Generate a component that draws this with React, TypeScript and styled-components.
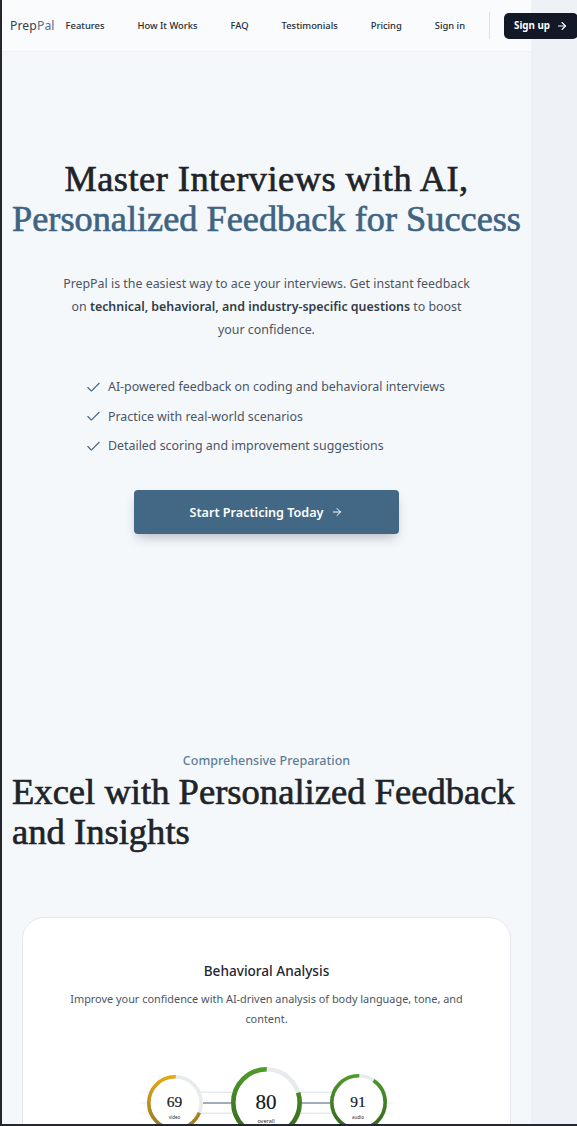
import React from "react";
import styled, { createGlobalStyle } from "styled-components";
import { ArrowRight, Check } from "lucide-react";

const GlobalStyle = createGlobalStyle`
  html, body {
    margin: 0;
    padding: 0;
    background: #eef2f6;
    overflow-x: hidden;
    scrollbar-width: none;
  }
  html::-webkit-scrollbar, body::-webkit-scrollbar { display: none; }
  * { box-sizing: border-box; }
`;

const Page = styled.div`
  width: 531px;
  min-height: 1500px;
  border-left: 2px solid #24282e;
  background: #f5f8fb;
  font-family: "Noto Sans", "Open Sans", sans-serif;
  color: #1f2937;
`;

const FrameEdge = styled.div`
  position: fixed;
  left: 0;
  right: 0;
  bottom: 0;
  height: 2px;
  background: #24282e;
  pointer-events: none;
  z-index: 10;
`;

const Header = styled.header`
  height: 52px;
  display: flex;
  align-items: center;
  padding-left: 8px;
  background: #fafbfd;
  border-bottom: 1px solid #eef1f5;
  white-space: nowrap;
`;

const Logo = styled.span`
  font-size: 12.2px;
  color: #3a4048;
  letter-spacing: 0.1px;
`;

const LogoAccent = styled.span`
  color: #4b7393;
`;

const NavLinks = styled.nav`
  display: flex;
  align-items: center;
  gap: 33px;
  margin-left: 11px;
`;

const NavLink = styled.a`
  font-size: 9.4px;
  font-weight: 500;
  color: #232a33;
  text-decoration: none;
`;

const Divider = styled.div`
  flex: none;
  width: 1px;
  height: 27px;
  background: #dde1e6;
  margin: 0 14px 0 24px;
`;

const SignUp = styled.button`
  display: inline-flex;
  align-items: center;
  gap: 6px;
  height: 26px;
  padding: 0 10px;
  border: none;
  border-radius: 5px;
  background: #121826;
  color: #ffffff;
  font-family: inherit;
  font-size: 9.8px;
  font-weight: 700;
`;

const Hero = styled.section`
  padding: 107px 10px 110px;
  text-align: center;
`;

const Title = styled.h1`
  margin: 0;
  font-family: "Liberation Serif", "Times New Roman", serif;
  font-size: 36.3px;
  line-height: 40px;
  font-weight: 400;
  color: #202328;
  -webkit-text-stroke: 0.65px currentColor;
`;

const TitleLead = styled.span`
  letter-spacing: 0.5px;
`;

const TitleAccent = styled.span`
  color: #3f6482;
`;

const Lead = styled.p`
  margin: 33px auto 0;
  max-width: 414px;
  font-size: 12.4px;
  line-height: 23px;
  color: #4b5563;
`;

const LeadStrong = styled.b`
  font-weight: 600;
  color: #343c48;
`;

const CheckList = styled.ul`
  display: flex;
  flex-direction: column;
  gap: 9.5px;
  width: fit-content;
  margin: 36px auto 0;
  padding: 0;
  list-style: none;
  text-align: left;
`;

const CheckItem = styled.li`
  display: flex;
  align-items: center;
  gap: 6px;
  font-size: 12.4px;
  line-height: 20px;
  color: #4b5563;

  svg {
    flex: none;
    color: #3e5f7c;
    margin-left: -3px;
  }
`;

const PrimaryButton = styled.button`
  display: flex;
  align-items: center;
  gap: 8px;
  width: fit-content;
  height: 44px;
  margin: 34px auto 0;
  padding: 0 56px;
  border: none;
  border-radius: 4px;
  background: #436886;
  color: #ffffff;
  font-family: inherit;
  font-size: 12.6px;
  font-weight: 600;
  box-shadow: 0 6px 12px -3px rgba(30, 41, 59, 0.3);
`;

const Features = styled.section`
  padding: 108px 10px 0;
`;

const Eyebrow = styled.p`
  margin: 0;
  text-align: center;
  font-size: 12.5px;
  line-height: 18px;
  font-weight: 500;
  color: #5d7e98;
`;

const SectionTitle = styled.h2`
  margin: 2px 0 0;
  font-family: "Liberation Serif", "Times New Roman", serif;
  font-size: 36.6px;
  line-height: 40px;
  font-weight: 400;
  color: #202328;
  -webkit-text-stroke: 0.65px currentColor;
`;

const Card = styled.div`
  margin: 65px 10px 0;
  padding: 43px 20px 40px;
  background: #ffffff;
  border: 1px solid #e4e8ee;
  border-radius: 22px;
  text-align: center;
`;

const CardTitle = styled.h3`
  margin: 0;
  font-size: 13.6px;
  line-height: 20px;
  font-weight: 500;
  color: #1f2630;
`;

const CardText = styled.p`
  margin: 8px auto 0;
  max-width: 404px;
  font-size: 10.9px;
  line-height: 20px;
  color: #4b5563;
`;

const GaugeRow = styled.div`
  position: relative;
  display: flex;
  justify-content: center;
  align-items: center;
  gap: 28px;
  margin-top: 38px;
`;

const Rails = styled.svg`
  position: absolute;
  left: 50%;
  top: 50%;
  width: 260px;
  height: 30px;
  transform: translate(-50%, -50%);
`;

const GaugeBox = styled.div<{ $size: number }>`
  position: relative;
  display: grid;
  width: ${(p) => p.$size}px;
  height: ${(p) => p.$size}px;
  border-radius: 50%;
  background: #ffffff;

  & > * {
    grid-area: 1 / 1;
  }
`;

const GaugeFace = styled.div<{ $big: boolean }>`
  display: flex;
  flex-direction: column;
  align-items: center;
  justify-content: center;
  padding-top: ${(p) => (p.$big ? 9 : 8)}px;
`;

const GaugeValue = styled.span<{ $big: boolean }>`
  font-family: "Liberation Serif", "Times New Roman", serif;
  font-size: ${(p) => (p.$big ? 21 : 15.5)}px;
  line-height: ${(p) => (p.$big ? 22 : 16)}px;
  color: #15181c;
  -webkit-text-stroke: 0.2px currentColor;
`;

const GaugeLabel = styled.span<{ $big: boolean }>`
  margin-top: ${(p) => (p.$big ? 5 : 4)}px;
  font-size: ${(p) => (p.$big ? 5.5 : 4.5)}px;
  line-height: 6px;
  color: #2b2f35;
`;

type GaugeProps = {
  id: string;
  value: number;
  label: string;
  size: number;
  stroke: number;
  from: string;
  to: string;
  big?: boolean;
};

function Gauge({ id, value, label, size, stroke, from, to, big = false }: GaugeProps) {
  const r = size / 2 - stroke / 2;
  const c = 2 * Math.PI * r;
  const len = (value / 100) * c;
  const start = 0.75 * c + ((100 - value) / 100) * c;
  return (
    <GaugeBox $size={size}>
      <svg width={size} height={size} viewBox={`0 0 ${size} ${size}`}>
        <defs>
          <linearGradient id={id} x1="0" y1="0" x2="0" y2={size} gradientUnits="userSpaceOnUse">
            <stop offset="0" stopColor={from} />
            <stop offset="1" stopColor={to} />
          </linearGradient>
        </defs>
        <circle cx={size / 2} cy={size / 2} r={r} fill="none" stroke="#e8ebee" strokeWidth={stroke} />
        <circle
          cx={size / 2}
          cy={size / 2}
          r={r}
          fill="none"
          stroke={`url(#${id})`}
          strokeWidth={stroke}
          strokeDasharray={`${len} ${c - len}`}
          strokeDashoffset={-start}
        />
      </svg>
      <GaugeFace $big={big}>
        <GaugeValue $big={big}>{value}</GaugeValue>
        <GaugeLabel $big={big}>{label}</GaugeLabel>
      </GaugeFace>
    </GaugeBox>
  );
}

const navItems = ["Features", "How It Works", "FAQ", "Testimonials", "Pricing", "Sign in"];

const checks = [
  "AI-powered feedback on coding and behavioral interviews",
  "Practice with real-world scenarios",
  "Detailed scoring and improvement suggestions",
];

export default function App() {
  return (
    <>
      <GlobalStyle />
      <Page>
        <Header>
          <Logo>
            Prep<LogoAccent>Pal</LogoAccent>
          </Logo>
          <NavLinks>
            {navItems.map((n) => (
              <NavLink key={n} href="#">
                {n}
              </NavLink>
            ))}
          </NavLinks>
          <Divider />
          <SignUp>
            Sign up <ArrowRight size={12} strokeWidth={2.2} />
          </SignUp>
        </Header>

        <Hero>
          <Title>
            <TitleLead>Master Interviews with AI,</TitleLead>
            <br />
            <TitleAccent>Personalized Feedback for Success</TitleAccent>
          </Title>
          <Lead>
            PrepPal is the easiest way to ace your interviews. Get instant feedback on{" "}
            <LeadStrong>technical, behavioral, and industry-specific questions</LeadStrong> to boost
            your confidence.
          </Lead>
          <CheckList>
            {checks.map((c) => (
              <CheckItem key={c}>
                <Check size={17} strokeWidth={1.5} />
                {c}
              </CheckItem>
            ))}
          </CheckList>
          <PrimaryButton>
            Start Practicing Today <ArrowRight size={12} strokeWidth={2} />
          </PrimaryButton>
        </Hero>

        <Features>
          <Eyebrow>Comprehensive Preparation</Eyebrow>
          <SectionTitle>Excel with Personalized Feedback and Insights</SectionTitle>
          <Card>
            <CardTitle>Behavioral Analysis</CardTitle>
            <CardText>
              Improve your confidence with AI-driven analysis of body language, tone, and content.
            </CardText>
            <GaugeRow>
              <Rails viewBox="0 0 260 30">
                <defs>
                  <linearGradient id="railFaint" x1="0" y1="0" x2="1" y2="0">
                    <stop offset="0" stopColor="#e6e9ed" stopOpacity="0" />
                    <stop offset="0.08" stopColor="#e6e9ed" />
                    <stop offset="0.92" stopColor="#e6e9ed" />
                    <stop offset="1" stopColor="#e6e9ed" stopOpacity="0" />
                  </linearGradient>
                  <linearGradient id="railMid" x1="0" y1="0" x2="1" y2="0">
                    <stop offset="0" stopColor="#dde2e7" stopOpacity="0" />
                    <stop offset="0.08" stopColor="#dde2e7" />
                    <stop offset="0.2" stopColor="#dde2e7" />
                    <stop offset="0.21" stopColor="#a3adb9" />
                    <stop offset="0.79" stopColor="#a3adb9" />
                    <stop offset="0.8" stopColor="#dde2e7" />
                    <stop offset="0.92" stopColor="#dde2e7" />
                    <stop offset="1" stopColor="#dde2e7" stopOpacity="0" />
                  </linearGradient>
                </defs>
                <rect x="0" y="3.5" width="260" height="1.5" fill="url(#railFaint)" />
                <rect x="0" y="14" width="260" height="2" fill="url(#railMid)" />
                <rect x="0" y="24.5" width="260" height="1.5" fill="url(#railFaint)" />
              </Rails>
              <Gauge id="gVideo" value={69} label="video" size={56} stroke={3.6} from="#e4ab14" to="#94761f" />
              <Gauge id="gOverall" value={80} label="overall" size={71} stroke={4.6} from="#4f9c2b" to="#35641d" big />
              <Gauge id="gAudio" value={91} label="audio" size={57} stroke={3.6} from="#4f9c2b" to="#35641d" />
            </GaugeRow>
          </Card>
        </Features>
      </Page>
      <FrameEdge />
    </>
  );
}
